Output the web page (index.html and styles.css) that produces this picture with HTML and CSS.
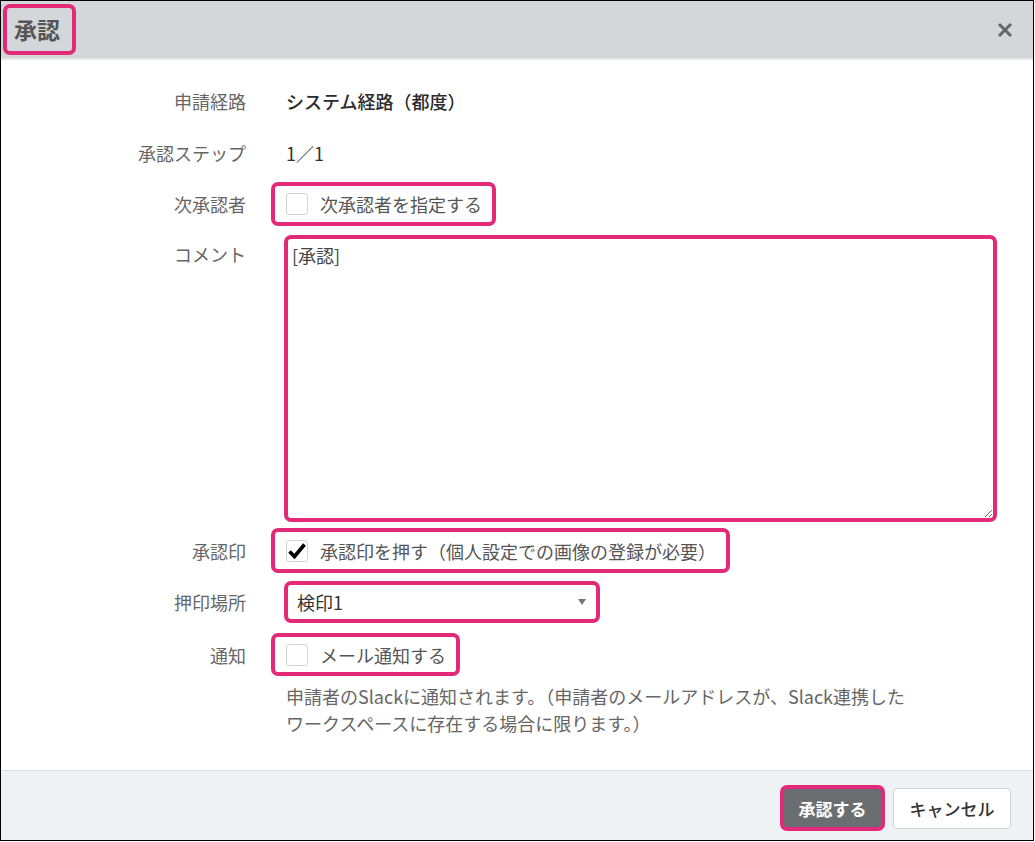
FILE: index.html
```html
<!DOCTYPE html>
<html lang="ja">
<head>
<meta charset="utf-8">
<title>承認</title>
<link rel="stylesheet" href="styles.css">
</head>
<body>
<div class="dialog">
  <header class="dlg-header">
    <h1 class="dlg-title mark">承認</h1>
    <button class="close-btn" type="button" aria-label="閉じる">
      <svg width="16" height="16" viewBox="0 0 16 16"><path d="M2 2 L14 14 M14 2 L2 14" stroke="#666" stroke-width="3" stroke-linecap="butt" fill="none"/></svg>
    </button>
  </header>
  <main class="dlg-body">
    <div class="row row-text">
      <div class="label">申請経路</div>
      <div class="field value strong">システム経路（都度）</div>
    </div>
    <div class="row row-text">
      <div class="label">承認ステップ</div>
      <div class="field value">1／1</div>
    </div>
    <div class="row row-next">
      <div class="label">次承認者</div>
      <label class="field check-wrap mark"><span class="cbox"></span><span class="check-text">次承認者を指定する</span></label>
    </div>
    <div class="row row-comment">
      <div class="label label-top">コメント</div>
      <textarea class="field comment mark">[承認]</textarea>
    </div>
    <div class="row row-stamp">
      <div class="label">承認印</div>
      <label class="field check-wrap mark"><span class="cbox checked"><svg width="20" height="20" viewBox="0 0 20 20"><path d="M2.5 10.5 L7.5 15.5 L17.5 3.5" stroke="#000" stroke-width="3.6" fill="none"/></svg></span><span class="check-text">承認印を押す（個人設定での画像の登録が必要）</span></label>
    </div>
    <div class="row row-place">
      <div class="label">押印場所</div>
      <div class="field select mark"><span class="select-text">検印1</span><svg class="select-arrow" width="8" height="6" viewBox="0 0 8 6"><path d="M0 0 H8 L4 6 Z" fill="#777"/></svg></div>
    </div>
    <div class="row row-notify">
      <div class="label">通知</div>
      <label class="field check-wrap mark"><span class="cbox"></span><span class="check-text">メール通知する</span></label>
    </div>
    <p class="note">申請者のSlackに通知されます。（申請者のメールアドレスが、Slack連携した<br>ワークスペースに存在する場合に限ります。）</p>
  </main>
  <footer class="dlg-footer">
    <button class="btn btn-primary mark" type="button">承認する</button>
    <button class="btn btn-cancel" type="button">キャンセル</button>
  </footer>
</div>
</body>
</html>
```

FILE: styles.css
```css
html, body {
  margin: 0;
  padding: 0;
  background: #fff;
}

body {
  font-family: "Noto Sans CJK JP", "Noto Sans", sans-serif;
  font-size: 18px;
  color: #333;
}

.dialog {
  width: 1034px;
  height: 841px;
  box-sizing: border-box;
  border: 1px solid #000;
  display: flex;
  flex-direction: column;
  background: #fff;
}

.mark {
  border: 4px solid #e22a79;
  border-radius: 7px;
}

.dlg-header {
  height: 59px;
  box-sizing: border-box;
  background: #d4d7da;
  border-bottom: 2px solid #e6e8ea;
  display: flex;
  align-items: center;
  justify-content: space-between;
  padding: 0 20px 0 2px;
  flex: none;
}

.dlg-title {
  margin: 0;
  font-size: 23px;
  font-weight: bold;
  line-height: 35px;
  color: #555;
  padding: 4px 12px 4px 7px;
}

.close-btn {
  border: 0;
  background: transparent;
  padding: 0;
  width: 16px;
  height: 16px;
  display: flex;
}

.dlg-body {
  flex: 1;
  padding-top: 15px;
  display: flex;
  flex-direction: column;
}

.row {
  display: flex;
  align-items: center;
}

.label {
  width: 245px;
  flex: none;
  text-align: right;
  color: #666;
  line-height: 26px;
}

.label-top {
  align-self: flex-start;
  padding-top: 6px;
}

.field {
  margin-left: 25px;
}

.value {
  padding-left: 15px;
  color: #333;
  line-height: 26px;
}

.strong {
  font-weight: 500;
  color: #2b2b2b;
}

.row-text {
  height: 52px;
}

.check-wrap {
  display: inline-flex;
  align-items: center;
  gap: 12px;
  box-sizing: border-box;
  padding: 0 10px 0 11px;
  color: #555;
}

.cbox {
  width: 22px;
  height: 22px;
  box-sizing: border-box;
  border: 1px solid #d2d2d2;
  border-radius: 3px;
  background: #fff;
  display: flex;
  align-items: center;
  justify-content: center;
  flex: none;
}

.check-text {
  line-height: 26px;
}

.row-next {
  margin-top: 3px;
}
.row-next .check-wrap {
  height: 44px;
}

.row-comment {
  margin-top: 9px;
  align-items: flex-start;
}

.comment {
  margin-left: 38px;
  width: 713px;
  height: 287px;
  box-sizing: border-box;
  padding: 4px;
  font-family: "Noto Sans CJK JP", "Noto Sans", sans-serif;
  font-size: 18px;
  line-height: 24px;
  color: #444;
  resize: both;
  outline: none;
}

.row-stamp {
  margin-top: 6px;
}
.row-stamp .check-wrap {
  height: 45px;
}

.row-place {
  margin-top: 8px;
}

.select {
  margin-left: 38px;
  width: 316px;
  height: 42px;
  box-sizing: border-box;
  display: flex;
  align-items: center;
  justify-content: space-between;
  padding: 0 10px 0 9px;
  color: #333;
}

.select-text {
  line-height: 26px;
}

.row-notify {
  margin-top: 10px;
}
.row-notify .check-wrap {
  height: 43px;
}

.note {
  margin: 7px 0 0 285px;
  color: #666;
  line-height: 27px;
  font-size: 18px;
}

.dlg-footer {
  flex: none;
  height: 70px;
  box-sizing: border-box;
  border-top: 1px solid #d9dee2;
  background: #eef2f5;
  display: flex;
  justify-content: flex-end;
  align-items: center;
  gap: 8px;
  padding: 5px 22px 0 0;
}

.btn {
  font-family: "Noto Sans CJK JP", "Noto Sans", sans-serif;
  font-size: 17px;
  box-sizing: border-box;
  padding: 0;
  cursor: pointer;
}

.btn-primary {
  width: 105px;
  height: 46px;
  background: #6b6e71;
  color: #fff;
  font-weight: bold;
}

.btn-cancel {
  width: 118px;
  height: 41px;
  border: 1px solid #cfd3d6;
  border-radius: 4px;
  background: #fff;
  color: #333;
  font-weight: 500;
}
```
